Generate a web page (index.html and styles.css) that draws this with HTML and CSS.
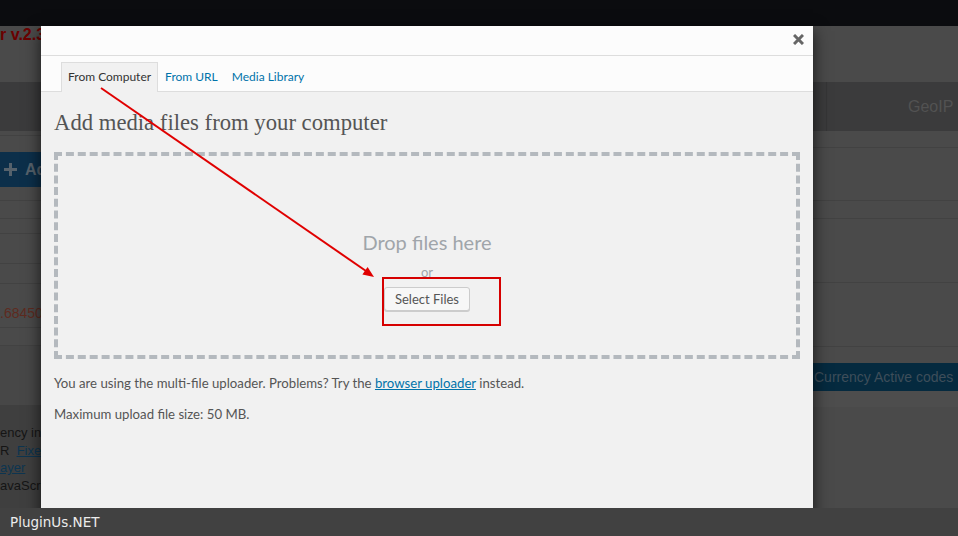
FILE: index.html
```html
<!DOCTYPE html>
<html lang="en">
<head>
    <meta charset="UTF-8">
    <meta name="viewport" content="width=device-width, initial-scale=1.0">
    <title>Upload Media</title>
    <link rel="stylesheet" href="styles.css">
</head>
<body>
 <div class="adminbar"></div>

 <div class="page">
    <div class="page-title">r v.2.3</div>

    <div class="nav">
        <div class="nav-geo">GeoIP</div>
    </div>

    <div class="cols">
        <div class="col-left">
            <div class="row h4"></div>
            <div class="gap16"></div>
            <div class="add-btn">
                <svg width="13" height="13" viewBox="0 0 13 13"><path d="M6.5 0v13M0 6.5h13" stroke="#56626c" stroke-width="3"/></svg>
                <span>Add</span>
            </div>
            <div class="row h13"></div>
            <div class="row h17"></div>
            <div class="row h14"></div>
            <div class="row h29"></div>
            <div class="row h19"></div>
            <div class="row h43 rate"><span>.68450</span></div>
            <div class="row h17"></div>
            <div class="left-note"></div>
            <div class="left-info">
                <div>ency info</div>
                <div>R &nbsp;<a href="#">Fixer</a></div>
                <div><a href="#">ayer</a></div>
                <div>avaScript</div>
            </div>
        </div>

        <div class="col-right">
            <div class="row h16"></div>
            <div class="row h52"></div>
            <div class="row h17"></div>
            <div class="row h63"></div>
            <div class="row h63"></div>
            <div class="gap16"></div>
            <div class="codes-bar">Currency Active codes</div>
            <div class="codes-foot"></div>
        </div>
    </div>
 </div>

 <div class="modal">
    <div class="media-head">
        <span class="close">
            <svg width="11" height="11" viewBox="0 0 11 11"><path d="M1 1l9 9M10 1l-9 9" stroke="#666" stroke-width="3"/></svg>
        </span>
    </div>
    <div class="media-tabs">
        <div class="tab active">From Computer</div>
        <div class="tab">From URL</div>
        <div class="tab">Media Library</div>
    </div>
    <div class="media-body">
        <h2>Add media files from your computer</h2>
        <div class="dropzone">
            <div class="drop-title">Drop files here</div>
            <div class="drop-or">or</div>
            <button class="select-btn">Select Files</button>
        </div>
        <p class="note">You are using the multi-file uploader. Problems? Try the <a href="#">browser uploader</a> instead.</p>
        <p class="note note-size">Maximum upload file size: 50 MB.</p>
    </div>
 </div>

 <svg class="marks" width="958" height="536" viewBox="0 0 958 536">
    <line x1="101" y1="88" x2="366" y2="271" stroke="#e00000" stroke-width="2"/>
    <polygon points="374,277 362.4,274.4 367.6,267" fill="#e00000"/>
    <rect x="383" y="278" width="117" height="47" fill="none" stroke="#d60000" stroke-width="2"/>
 </svg>

 <div class="footer">PluginUs.NET</div>
</body>
</html>
```

FILE: styles.css
```css
* {
    box-sizing: border-box;
}

body {
    margin: 0;
    width: 958px;
    height: 536px;
    position: relative;
    overflow: hidden;
    background-color: #4a4a4a;
    font-family: "Liberation Sans", Arial, sans-serif;
}

.adminbar {
    height: 26px;
    background-color: #0b0c0f;
}

.page-title {
    height: 56px;
    color: #6b0000;
    font-weight: bold;
    font-size: 16px;
    line-height: 18px;
    white-space: nowrap;
}

.nav {
    height: 49px;
    display: flex;
    justify-content: flex-end;
    background-color: #3b3b3c;
}

.nav-geo {
    width: 132px;
    padding-left: 81px;
    border-left: 1px solid #353536;
    color: #525252;
    font-size: 16px;
    line-height: 49px;
}

.cols {
    display: flex;
    justify-content: space-between;
    height: 377px;
}

.col-left {
    width: 200px;
    display: flex;
    flex-direction: column;
}

.col-right {
    width: 145px;
    display: flex;
    flex-direction: column;
}

.row {
    border-bottom: 1px solid #424242;
}

.h4 { height: 5px; }
.h13 { height: 14px; }
.h14 { height: 15px; }
.h16 { height: 17px; }
.h17 { height: 18px; }
.h19 { height: 20px; }
.h29 { height: 30px; }
.h43 { height: 44px; }
.h52 { height: 53px; }
.h63 { height: 64px; }

.gap16 {
    height: 16px;
}

.add-btn {
    height: 35px;
    width: 120px;
    display: flex;
    align-items: center;
    gap: 8px;
    padding-left: 4px;
    background-color: #0c2f4a;
    color: #56626c;
    font-weight: bold;
    font-size: 16px;
}

.rate {
    display: flex;
    align-items: flex-end;
    padding-bottom: 6px;
    color: #5e2a1f;
    font-size: 14px;
}

.left-note {
    height: 59px;
    background-color: #474747;
}

.left-info {
    flex: 1;
    padding-top: 19px;
    background-color: #3f3f3f;
    color: #151515;
    font-size: 13px;
    line-height: 17.5px;
    white-space: nowrap;
}

.left-info a {
    color: #0d3550;
}

.codes-bar {
    height: 28px;
    padding-left: 1px;
    background-color: #052a3f;
    color: #3e4e5a;
    font-size: 14px;
    line-height: 28px;
    white-space: nowrap;
}

.codes-foot {
    height: 16px;
    background-color: #4d4d4d;
}

/* media modal */
.modal {
    position: absolute;
    left: 41px;
    top: 26px;
    width: 772px;
    height: 510px;
    display: flex;
    flex-direction: column;
    background-color: #f1f1f1;
    box-shadow: 0 5px 15px rgba(0, 0, 0, 0.7);
    font-family: Lato, "Open Sans", sans-serif;
}

.media-head {
    height: 30px;
    display: flex;
    justify-content: flex-end;
    align-items: center;
    padding: 0 9px 2px 0;
    background-color: #fcfcfc;
    border-bottom: 1px solid #ddd;
}

.close {
    display: flex;
}

.media-tabs {
    height: 36px;
    display: flex;
    align-items: flex-end;
    padding-left: 20px;
    background-color: #fcfcfc;
    box-shadow: inset 0 -1px 0 #ddd;
}

.tab {
    height: 30px;
    padding: 0 6px;
    border: 1px solid transparent;
    border-bottom: none;
    color: #0073aa;
    font-size: 12px;
    line-height: 28px;
}

.tab.active {
    border-color: #ddd;
    background-color: #f1f1f1;
    color: #333;
}

.media-body {
    padding: 0 13px;
}

.media-body h2 {
    margin: 16px 0 0;
    font-family: "Liberation Serif", Georgia, serif;
    font-weight: normal;
    font-size: 22.7px;
    line-height: 30px;
    color: #555;
}

.dropzone {
    height: 207px;
    margin-top: 14px;
    padding-top: 72px;
    display: flex;
    flex-direction: column;
    align-items: center;
    border: 4px dashed #b4b9be;
}

.drop-title {
    font-size: 20px;
    line-height: 28px;
    color: #a0a5aa;
}

.drop-or {
    margin-top: 7px;
    font-size: 13px;
    line-height: 18px;
    color: #a0a5aa;
}

.select-btn {
    margin-top: 6px;
    height: 24px;
    padding: 0 10px;
    border: 1px solid #ccc;
    border-radius: 3px;
    background-color: #f7f7f7;
    box-shadow: 0 1px 0 #ccc;
    color: #555;
    font-family: Lato, "Open Sans", sans-serif;
    font-size: 13px;
    line-height: 22px;
}

.note {
    margin: 15px 0 0;
    font-size: 13.2px;
    line-height: 18px;
    color: #555;
}

.note-size {
    margin-top: 13px;
}

.note a {
    color: #0073aa;
}

.marks {
    position: absolute;
    left: 0;
    top: 0;
    pointer-events: none;
}

.footer {
    position: absolute;
    left: 0;
    right: 0;
    bottom: 0;
    height: 28px;
    padding-left: 10px;
    background-color: #414141;
    color: #ececec;
    font-family: "DejaVu Sans", Verdana, sans-serif;
    font-size: 13.5px;
    line-height: 28px;
}
```
